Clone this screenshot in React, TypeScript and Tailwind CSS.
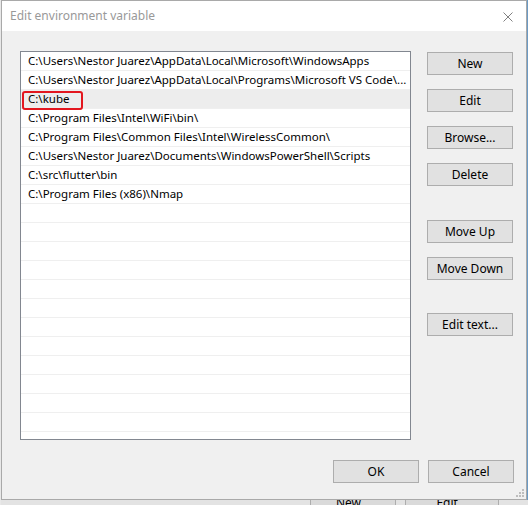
import React from "react";

const items = [
  "C:\\Users\\Nestor Juarez\\AppData\\Local\\Microsoft\\WindowsApps",
  "C:\\Users\\Nestor Juarez\\AppData\\Local\\Programs\\Microsoft VS Code\\...",
  "C:\\kube",
  "C:\\Program Files\\Intel\\WiFi\\bin\\",
  "C:\\Program Files\\Common Files\\Intel\\WirelessCommon\\",
  "C:\\Users\\Nestor Juarez\\Documents\\WindowsPowerShell\\Scripts",
  "C:\\src\\flutter\\bin",
  "C:\\Program Files (x86)\\Nmap",
];

const rows = [...items, ...Array(14).fill("")];

function Btn({ label, className = "" }: { label: string; className?: string }) {
  return (
    <div
      className={`w-[86px] h-[23px] flex items-center justify-center bg-[#e1e1e1] border border-[#adadad] text-[12px] text-black ${className}`}
    >
      {label}
    </div>
  );
}

export default function App() {
  return (
    <div
      className="w-[528px] h-[505px] overflow-hidden bg-[#e8e8e8] flex flex-col pl-[1px]"
      style={{ fontFamily: '"Noto Sans", "Open Sans", sans-serif' }}
    >
      <div className="flex h-[500px]">
        <div className="w-[526px] h-[500px] border border-[#a9a9a9] flex flex-col bg-[#f0f0f0] relative">
          {/* title bar */}
          <div className="h-[30px] bg-white flex items-center justify-between pl-[8px] pr-[13px]">
            <span className="text-[12px] text-[#999999]">Edit environment variable</span>
            <svg width="10" height="10" viewBox="0 0 10 10" className="mt-[1px]">
              <path d="M0.5 0.5 L9.5 9.5 M9.5 0.5 L0.5 9.5" stroke="#808080" strokeWidth="1" />
            </svg>
          </div>
          {/* body */}
          <div className="flex-1 flex flex-col pl-[18px] pr-[12px] pt-[20px]">
            <div className="flex gap-[16px]">
              <div className="w-[391px] h-[389px] border border-[#828790] bg-white overflow-hidden">
                {rows.map((t, i) => (
                  <div
                    key={i}
                    className={`h-[19px] border-b border-[#efefef] pl-[7px] flex items-center text-[11.5px] text-black whitespace-nowrap relative ${
                      i === 2 ? "bg-[#ededed]" : ""
                    }`}
                  >
                    {t}
                    {i === 2 && (
                      <div className="absolute left-[1px] top-[1px] w-[61px] h-[19px] border-2 border-[#e3161e] rounded-[3px]" />
                    )}
                  </div>
                ))}
              </div>
              <div className="flex flex-col pt-[1px]">
                <Btn label="New" />
                <Btn label="Edit" className="mt-[14px]" />
                <Btn label="Browse..." className="mt-[14px]" />
                <Btn label="Delete" className="mt-[14px]" />
                <Btn label="Move Up" className="mt-[34px]" />
                <Btn label="Move Down" className="mt-[14px]" />
                <Btn label="Edit text..." className="mt-[33px]" />
              </div>
            </div>
            <div className="flex justify-end gap-[9px] mt-[20px]">
              <Btn label="OK" />
              <Btn label="Cancel" />
            </div>
          </div>
          {/* resize grip */}
          <svg width="10" height="10" viewBox="0 0 10 10" className="absolute right-[1px] bottom-[1px]">
            <rect x="7" y="1" width="2" height="2" fill="#bdbdbd" />
            <rect x="4" y="4" width="2" height="2" fill="#bdbdbd" />
            <rect x="7" y="4" width="2" height="2" fill="#bdbdbd" />
            <rect x="1" y="7" width="2" height="2" fill="#bdbdbd" />
            <rect x="4" y="7" width="2" height="2" fill="#bdbdbd" />
            <rect x="7" y="7" width="2" height="2" fill="#bdbdbd" />
          </svg>
        </div>
        <div className="flex-1 bg-[#6b9ac4]" />
      </div>
      {/* underlying window peeking below */}
      <div className="h-[5px] overflow-hidden bg-[#e3e3e3] flex pl-[309px]">
        <div className="w-[86px] h-[20px] -mt-[8px] border border-[#adadad] bg-[#dadada] flex justify-center text-[12px] text-black leading-[20px]">
          New...
        </div>
        <div className="w-[94px] h-[20px] -mt-[8px] ml-[9px] border border-[#adadad] bg-[#dadada] flex justify-center text-[12px] text-black leading-[20px]">
          Edit...
        </div>
      </div>
    </div>
  );
}
